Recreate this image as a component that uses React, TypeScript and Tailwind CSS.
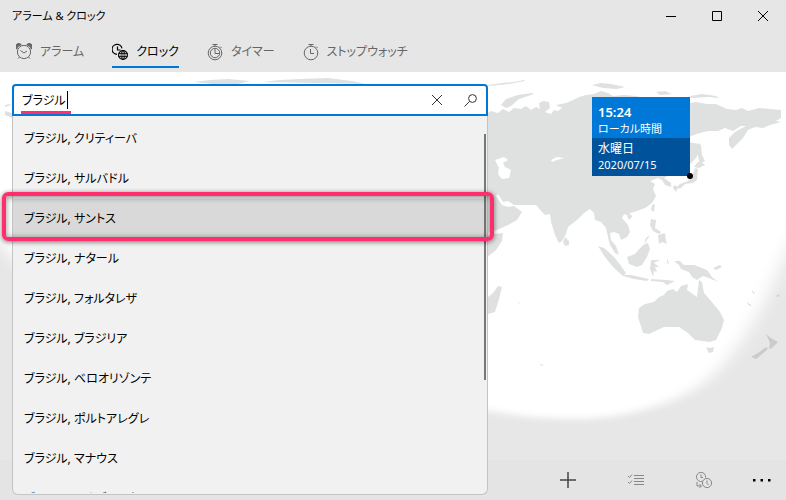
import { useState } from "react";

const cities = [
  "クリティーバ",
  "サルバドル",
  "サントス",
  "ナタール",
  "フォルタレザ",
  "ブラジリア",
  "ベロオリゾンテ",
  "ポルトアレグレ",
  "マナウス",
  "リオデジャネイロ",
];

function AlarmIcon() {
  return (
    <svg width="16" height="18" viewBox="1 0 16 18" fill="none" stroke="currentColor">
      <circle cx="9" cy="9" r="6.600" />
      <path d="M5.500 7.500 9 10l3-2M4.500 14 3 15.500M13.500 14l1.500 1.500" />
      <path d="M1.200 5.800A3 3 0 0 1 6.300 1.800C4 2.500 2.300 4 1.800 6zM16.800 5.800A3 3 0 0 0 11.700 1.800c2.300.7 4 2.200 4.500 4.200z" fill="currentColor" strokeWidth="1" />
    </svg>
  );
}

function ClockIcon() {
  return (
    <svg width="16" height="18" viewBox="1 0 16 18" fill="none" stroke="currentColor">
      <path d="M6 11.300A5 5 0 1 1 11 5.300" strokeWidth="1.200" />
      <path d="M6.500 3.500v3.500h3" strokeWidth="1.200" />
      <circle cx="12" cy="12" r="4.400" strokeWidth="1.200" />
      <ellipse cx="12" cy="12" rx="2" ry="4.400" strokeWidth=".8" />
      <path d="M7.500 10.500h9M7.500 13.500h9M12 7.500v9" strokeWidth=".8" />
    </svg>
  );
}

function TimerIcon() {
  return (
    <svg width="16" height="18" viewBox="1 0 16 18" fill="none" stroke="currentColor">
      <circle cx="9" cy="10" r="6.800" />
      <circle cx="9" cy="10" r="4.700" />
      <path d="M9 6v4.500h4M6.500 1.500h5M9 1.500V3M14 3.500l1.500 1.500" />
    </svg>
  );
}

function StopwatchIcon() {
  return (
    <svg width="16" height="18" viewBox="1 0 16 18" fill="none" stroke="currentColor">
      <circle cx="9" cy="10" r="6.800" />
      <path d="M8.500 6v4.500h3.500M6.500 1.500h5M9 1.500V3M14 3.500l1.500 1.500" />
    </svg>
  );
}

const tabs = [
  { label: "アラーム", Icon: AlarmIcon },
  { label: "クロック", Icon: ClockIcon },
  { label: "タイマー", Icon: TimerIcon },
  { label: "ストップウォッチ", Icon: StopwatchIcon },
];

function WorldMap() {
  return (
    <svg className="absolute inset-0 h-full w-full" viewBox="0 72 786 428" preserveAspectRatio="xMinYMin slice" aria-hidden="true">
      <defs>
        <filter id="wide" x="-20%" y="-20%" width="140%" height="140%">
          <feGaussianBlur stdDeviation="9 3" />
        </filter>
      </defs>
      <rect y="72" width="786" height="428" fill="#e7e7e7" />
      <path d="M-60 40H850V160C800 210 785 262 764 302C742 346 716 380 682 396C650 411 610 419 575 419C530 419 490 412 460 405C300 390 150 350 60 300C20 275 5 235 -60 200Z" fill="#fff" filter="url(#wide)" />
      <g fill="#dfe1e0">
        <path d="M486 114L491 111 498 113 503 109 509 112 514 108 521 109 526 106 531 110 536 107 540 109 539 103 543 101 549 102 550 108 545 112 551 114 554 110 558 111 562 108 556 105 566 103 573 100 579 97 586 95 594 94 601 91 608 93 613 96 624 95 636 96 650 99 670 100 690 103 696 102 707 104 716 104 727 109 736 110 742 108 748 111 759 108 770 109 781 110V118L776 121 781 122 770 125 763 128 755 127 748 130 743 138 738 143 732 149 729 145 729 138 735 132 746 126 741 126 733 131 725 128 718 131 708 131 700 133 691 136 688 142 699 144 700 151 696 158 690 164 682 171 670 175 664 178 671 183 671 187 665 185 662 180 658 178 650 181 655 184 653 189 656 196 652 203 645 208 637 211 630 213 629 216 624 214 622 218 628 225 630 232 627 237 621 240 619 234 614 232 610 233 611 240 616 246 619 255 615 253 610 245 608 237 606 228 601 222 595 220 594 213 590 209 584 213 577 220 568 227 566 234 562 241 559 243 555 235 551 222 550 214 545 215 541 211 536 205 530 205 514 205 508 201 503 202 498 194 496 196 502 205 508 207 514 206 522 212 517 220 508 225 499 229 488 233 486 231Z" />
        <path d="M486 235L503 233 502 241 496 250 486 258zM565 237l4 4v4l-4 1-2-4zM488 297l5-4 5-7 4 1-3 12-4 13-7 2z" />
        <path d="M501 105l5-6 12-4 14-2 2 1-15 5-8 7-5 2zM488 85l14-2 12-1 10-2 1 1-16 3-20 2zM592 85l9-2 10 1 14 3-8 2-14-1zM690 96l12-2 14 2 3 2-10-1-18 1zM656 92l9-1 7 3-12 1z" />
        <path d="M698 143l3 2 1 10 3 6-5 3-2-8zM697 163l3-2 5 4-6 3-5-1zM695 168l3 1-1 11-4 3-8 1-4 4-6 1 5-5 8-3 4-4zM674 185l4 2-2 5-3-4zM652 205l3-1-1 8-3-2z" />
        <path d="M651 219l5 1-1 8 6 4-2 2-6-3-3-6zM658 235l7-2 1 8 1 3-5-2-3 2zM650 235l-5 8-1 1 2-6zM627 216l4-2 1 3-3 3z" />
        <path d="M598 246l6 2 10 9 7 9 5 7-3 3-10-9-8-10zM622 275l9 0 9 2 9 2-2 2-13-2-11-3zM627 257l8-3 8-9 5-2 2 6-3 8-5 8-5 2-8-3zM651 260l9 0-6 3 5 4-4 0 2 5-3-1-1 6-3-8zM674 261l6 0 4 4 10 0 13 5 5 7 6 5-9-4-6-2-6 4-5-3-3-5-8-3-2-4zM667 258l2 6-2-1zM651 279l15 1 9 1-8 4-4-3-12-1zM713 268l7-3 2 2-6 3z" />
        <path d="M639 308L645 304 654 302 659 297 664 295 667 291 673 289 677 292 681 286 688 284 687 290 697 297 699 280 702 282 704 293 711 301 720 312 724 320 722 328 716 340 710 342 695 340 688 333 679 327 664 327 649 334 643 333 638 317zM706 347l4 1 4-1-1 5-4 1z" />
      </g>
      <g fill="#cbcbcb">
        <path d="M766 334l5 4 7 4-6 6-3 1 1-6zM766 347l2 2-7 6-5 4-5-2 7-4z" />
        <path d="M747 302l5 4-3-1zM752 290l3 4-2-1zM776 296l4-2-2 3z" />
      </g>
      <path d="M495 160L504 157 508 160 503 163 505 167 511 170 509 178 502 179 498 174 499 168zM551 160l6-3 7 1-7 2-5 2z" fill="#fff" />
      <g fill="#dfe1e0">
        <path d="M194 82l16-2 18-1 22 2-12 3-16 1zM262 82l18-2 20-1 28-1 24 3 14 3zM5 105l5-1 1 1-6 2zM5 111l7 2v5l-7-3z" />
        <path d="M540 364l4 1-3 1zM518 303l2-1-1 2z" />
      </g>
    </svg>
  );
}

export default function App() {
  const [query, setQuery] = useState("ブラジル");
  return (
    <div className="flex h-screen flex-col bg-[#e6e6e6] font-['Noto_Sans','Noto_Sans_CJK_JP',sans-serif] text-black [font-feature-settings:'palt']">
      <header className="flex h-8 shrink-0 items-center justify-between pl-3">
        <h1 className="text-[11px]">アラーム &amp; クロック</h1>
        <div className="flex">
          <button aria-label="最小化" className="flex h-8 w-[46px] items-center justify-center">
            <svg width="10" height="10" stroke="currentColor"><path d="M0 5.500h10" /></svg>
          </button>
          <button aria-label="最大化" className="flex h-8 w-[46px] items-center justify-center">
            <svg width="10" height="10" fill="none" stroke="currentColor"><path d="M.5.5h9v9h-9z" /></svg>
          </button>
          <button aria-label="閉じる" className="flex h-8 w-[46px] items-center justify-center">
            <svg width="10" height="10" stroke="currentColor"><path d="M0 0l10 10M10 0 0 10" /></svg>
          </button>
        </div>
      </header>

      <nav className="flex h-10 shrink-0 items-start gap-7 pl-4">
        {tabs.map(({ label, Icon }) => (
          <button
            key={label}
            className={
              label === "クロック"
                ? "flex h-9 items-center gap-2 border-b-2 border-[#0078d7] pt-1.5 text-xs"
                : "flex h-9 items-center gap-2 border-b-2 border-transparent pt-1.5 text-xs text-[#666]"
            }
          >
            <Icon />
            {label}
          </button>
        ))}
      </nav>

      <main className="relative flex min-h-0 flex-1 flex-col overflow-hidden">
        <WorldMap />

        <div className="absolute top-[25px] left-[592px] w-[98px] text-xs leading-4 text-white">
          <div className="h-[41px] bg-[#0078d7] px-1.5 pt-1.5">
            <p className="text-[13px] leading-[18px] font-semibold">15:24</p>
            <p className="text-[11px]">ローカル時間</p>
          </div>
          <div className="h-[38px] bg-[#00539b] px-1.5 pt-[3px]">
            <p>水曜日</p>
            <p className="text-[11px]">2020/07/15</p>
          </div>
          <span className="absolute -right-[3px] -bottom-[3px] size-1.5 rounded-full bg-black" />
        </div>

        <footer className="absolute inset-x-0 bottom-0 flex h-10 items-center justify-end bg-[#e4e4e4]">
          <button aria-label="追加" className="flex h-10 w-[68px] items-center justify-center text-[#444]">
            <svg width="16" height="16" stroke="currentColor" strokeWidth="1.500"><path d="M0 8h16M8 0v16" /></svg>
          </button>
          <button aria-label="選択" className="flex h-10 w-[68px] items-center justify-center text-[#888]">
            <svg width="16" height="16" fill="none" stroke="currentColor"><path d="M6 3.500h10M6 6.500h10M6 9.500h10M6 12.500h10M0 4l1.500 1.500L4 2.500M0 10l1.500 1.500L4 8.500" /></svg>
          </button>
          <button aria-label="時刻の比較" className="flex h-10 w-[68px] items-center justify-center text-[#888]">
            <svg width="16" height="16" fill="none" stroke="currentColor"><path d="M6.500 9.300A4.600 4.600 0 1 1 9.600 5.500M5 2.500V5.500h2M1 10v4h4M3.500 12l2 2-2 2M11 8.500v3l1.500 1.500" /><circle cx="11" cy="11" r="4.600" /></svg>
          </button>
          <button aria-label="その他" className="flex h-10 w-12 items-center justify-center">
            <svg width="18" height="4" fill="currentColor"><path d="M0 1h2.500v2.500H0zM7.500 1H10v2.500H7.500zM15 1h2.500v2.500H15z" /></svg>
          </button>
        </footer>

        <section className="relative mt-3 mb-[5px] ml-3 flex min-h-0 w-[476px] flex-1 flex-col">
          <div className="relative flex h-8 shrink-0 items-center rounded-t-sm border-2 border-[#0078d7] bg-white">
            <input
              aria-label="都市の検索"
              value={query}
              onChange={(event) => setQuery(event.target.value)}
              className="h-full min-w-0 flex-1 bg-transparent pl-2 text-xs outline-none"
            />
            <span className="absolute top-[5px] left-[53px] h-[18px] w-px bg-black" />
            <span className="absolute bottom-0 left-[7px] h-[3px] w-[50px] bg-[#ff2e6c]" />
            <button aria-label="クリア" onClick={() => setQuery("")} className="flex h-7 w-[36px] items-center justify-center text-[#333]">
              <svg width="12" height="12" stroke="currentColor"><path d="M1 1l10 10M11 1 1 11" /></svg>
            </button>
            <button aria-label="検索" className="flex h-7 w-[31px] items-center justify-center text-[#333]">
              <svg width="13" height="13" fill="none" stroke="currentColor"><circle cx="8.500" cy="4.500" r="3.900" /><path d="M5.700 7.300.5 12.500" /></svg>
            </button>
          </div>
          <div className="relative min-h-0 flex-1 rounded-b-md border border-t-0 border-[#c4c4c4] bg-[#f1f1f1] pt-[3px] pb-px">
            <ul className="h-full overflow-hidden text-xs">
              {cities.map((city) => (
                <li key={city} className={city === "サントス" ? "bg-[#d9d9d9]" : ""}>
                  <button className="flex h-10 w-full items-center pl-[11px] text-left">ブラジル, {city}</button>
                </li>
              ))}
            </ul>
            <span className="absolute top-[18px] right-px h-[246px] w-0.5 bg-[#777]" />
          </div>
          <div className="pointer-events-none absolute top-[108px] -right-[6px] -left-[10px] h-[49px] rounded-md border-4 border-[#ff2e6c] shadow-[0_1px_5px_#0008,inset_0_1px_6px_#0007]" />
        </section>
      </main>
    </div>
  );
}
